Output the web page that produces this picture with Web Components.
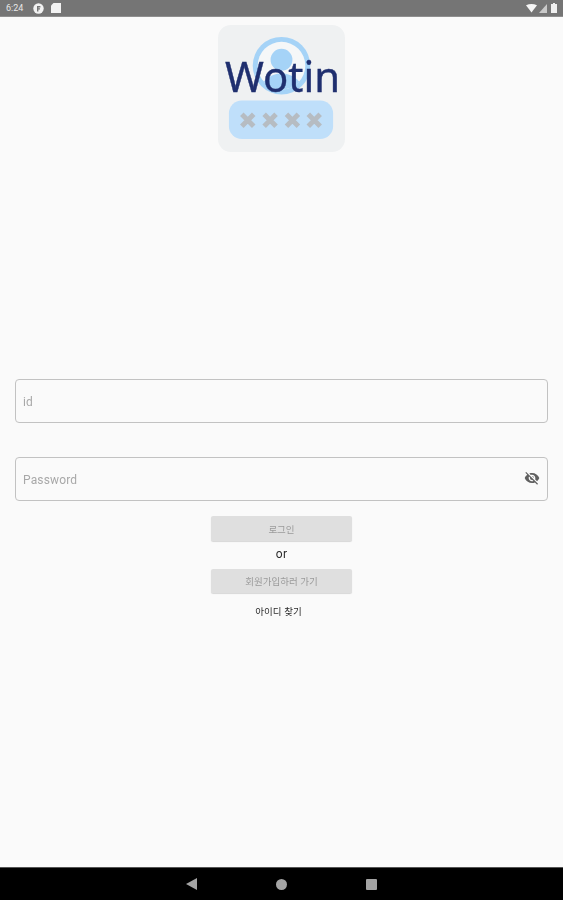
<!DOCTYPE html>
<html lang="ko">
<head>
<meta charset="utf-8">
<title>Wotin</title>
<style>
  html, body { margin: 0; height: 100%; }
  body { background: #fafafa; font-family: Roboto, "Noto Sans CJK KR", sans-serif; }
</style>
</head>
<body>
<app-screen>
  <status-bar slot="top"></status-bar>
  <login-form></login-form>
  <nav-bar slot="bottom"></nav-bar>
</app-screen>

<script>
class AppScreen extends HTMLElement {
  constructor() {
    super();
    this.attachShadow({ mode: 'open' });
    // the reference is a soft, rescaled capture, hence the slight blur
    this.shadowRoot.innerHTML = `
      <style>
        :host { display: flex; flex-direction: column; width: 563px; height: 900px; overflow: hidden; filter: blur(.4px); }
        main { flex: 1; min-height: 0; }
      </style>
      <slot name="top"></slot>
      <main><slot></slot></main>
      <slot name="bottom"></slot>
    `;
  }
}

class StatusBar extends HTMLElement {
  constructor() {
    super();
    this.attachShadow({ mode: 'open' });
    this.shadowRoot.innerHTML = `
      <style>
        :host {
          display: flex; align-items: center; gap: 5px;
          height: 17px; padding: 0 6px; box-sizing: border-box;
          background: #757575; color: #e8e8e8; border-bottom: 1px solid #8f8f8f;
          font: 9px Roboto, sans-serif;
        }
        .time { margin-right: 4px; width: 18px; }
        .right { margin-left: auto; display: flex; align-items: center; gap: 2px; }
        svg { display: block; }
      </style>
      <span class="time">6:24</span>
      <svg width="11" height="11" viewBox="0 0 11 11">
        <circle cx="5.5" cy="5.5" r="5.2" fill="#f2f2f2"/>
        <path d="M4 8.5V3h3.4v1.4H5.4v.8h1.6v1.3H5.4v2z" fill="#757575"/>
      </svg>
      <svg width="10" height="10" viewBox="0 0 10 10" style="margin-left:2px">
        <path d="M2.5 0H10v10H0V2.5z" fill="#f2f2f2"/>
      </svg>
      <div class="right">
        <svg width="11" height="9" viewBox="0 0 11 9"><path d="M0 1.2Q5.5-1 11 1.2L5.5 8.5z" fill="#f5f5f5"/></svg>
        <svg width="8" height="9" viewBox="0 0 8 9"><path d="M0 9L8 0v9z" fill="#c9c9c9"/></svg>
        <svg width="6" height="10" viewBox="0 0 6 10" style="margin-left:2px"><path d="M2 0h2v1h2v9H0V1h2z" fill="#f0f0f0"/></svg>
      </div>
    `;
  }
}

class WotinLogo extends HTMLElement {
  constructor() {
    super();
    this.attachShadow({ mode: 'open' });
    this.shadowRoot.innerHTML = `
      <style>
        :host { display: block; width: 127px; height: 127px; }
        svg { display: block; }
        text { font-family: "Noto Sans", "Open Sans", sans-serif; }
      </style>
      <svg width="127" height="127" viewBox="0 0 128 128">
        <defs><clipPath id="disc"><circle cx="64" cy="41" r="24"/></clipPath></defs>
        <rect width="128" height="128" rx="13" fill="#eff1f2"/>
        <circle cx="64" cy="41" r="29" fill="#a5d3f7"/>
        <circle cx="64" cy="41" r="24" fill="#f5f7f8"/>
        <circle cx="64" cy="35" r="11" fill="#a5d3f7"/>
        <ellipse cx="64" cy="68" rx="22" ry="19" fill="#a5d3f7" clip-path="url(#disc)"/>
        <rect x="11" y="76" width="105" height="39" rx="13" fill="#bfdffa"/>
        <g stroke="#b6bcc2" stroke-width="5" stroke-linecap="butt">
          <path d="M24 90l12 12M36 90l-12 12"/>
          <path d="M46.500 90l12 12M58.500 90l-12 12"/>
          <path d="M69 90l12 12M81 90l-12 12"/>
          <path d="M91 90l12 12M103 90l-12 12"/>
        </g>
        <text x="65" y="68" text-anchor="middle" font-size="43" fill="#1f2f6f" stroke="#1f2f6f" stroke-width=".4" textLength="116" lengthAdjust="spacingAndGlyphs">Wotin</text>
      </svg>
    `;
  }
}

class OutlinedField extends HTMLElement {
  constructor() {
    super();
    this.attachShadow({ mode: 'open' });
    this.shadowRoot.innerHTML = `
      <style>
        :host {
          display: flex; align-items: center;
          height: 44px; box-sizing: border-box; padding: 1px 7px 0;
          border: 1px solid #c2c2c2; border-radius: 4px;
          color: #a8a8a8; font: 12px/1 Roboto, sans-serif; letter-spacing: .15px;
        }
        .label { flex: 1; }
        ::slotted(svg) { display: block; margin-top: -3px; }
      </style>
      <span class="label"></span>
      <slot></slot>
    `;
  }
  connectedCallback() {
    this.shadowRoot.querySelector('.label').textContent = this.getAttribute('label');
  }
}

class FlatButton extends HTMLElement {
  constructor() {
    super();
    this.attachShadow({ mode: 'open' });
    this.shadowRoot.innerHTML = `
      <style>
        :host {
          display: flex; align-items: center; justify-content: center;
          width: 141px; height: 25px; border-radius: 2px;
          background: #dfdfdf; color: #9a9a9a;
          box-shadow: 0 1px 1px rgba(0,0,0,.14);
          font: 9.5px "Noto Sans CJK KR", sans-serif;
        }
      </style>
      <slot></slot>
    `;
  }
}

class LoginForm extends HTMLElement {
  constructor() {
    super();
    this.attachShadow({ mode: 'open' });
    this.shadowRoot.innerHTML = `
      <style>
        :host { display: flex; flex-direction: column; align-items: center; padding-top: 8px; }
        wotin-logo { margin-bottom: 227px; }
        outlined-field { align-self: stretch; margin: 0 15px 34px; }
        outlined-field.pw { margin-bottom: 15px; }
        .or { margin: 5px 0 6px; height: 17px; font: 12px/17px Roboto, sans-serif; color: #2b2b2b; letter-spacing: .3px; }
        .signup { height: 24px; }
        .find { margin: 10px 6px 0 0; font: 9.5px/17px "Noto Sans CJK KR", sans-serif; color: #2b2b2b; }
      </style>
      <wotin-logo></wotin-logo>
      <outlined-field label="id"></outlined-field>
      <outlined-field class="pw" label="Password">
        <svg width="16" height="16" viewBox="0 0 24 24" fill="#5f5f5f">
          <path d="M12 7c2.76 0 5 2.24 5 5 0 .65-.13 1.26-.36 1.83l2.92 2.92c1.51-1.26 2.7-2.89 3.43-4.75-1.73-4.39-6-7.5-11-7.5-1.4 0-2.74.25-3.98.7l2.16 2.16C10.74 7.13 11.35 7 12 7zM2 4.27l2.28 2.28.46.46C3.08 8.3 1.78 10.02 1 12c1.73 4.39 6 7.5 11 7.5 1.55 0 3.03-.3 4.38-.84l.42.42L19.73 22 21 20.73 3.27 3 2 4.27zM7.53 9.8l1.55 1.55c-.05.21-.08.43-.08.65 0 1.66 1.34 3 3 3 .22 0 .44-.03.65-.08l1.55 1.55c-.67.33-1.41.53-2.2.53-2.76 0-5-2.24-5-5 0-.79.2-1.53.53-2.2zm4.31-.78l3.15 3.15.02-.16c0-1.66-1.34-3-3-3l-.17.01z"/>
        </svg>
      </outlined-field>
      <flat-button>로그인</flat-button>
      <div class="or">or</div>
      <flat-button class="signup">회원가입하러 가기</flat-button>
      <div class="find">아이디 찾기</div>
    `;
  }
}

class NavBar extends HTMLElement {
  constructor() {
    super();
    this.attachShadow({ mode: 'open' });
    this.shadowRoot.innerHTML = `
      <style>
        :host {
          display: flex; align-items: center; justify-content: center; gap: 79px;
          height: 33px; background: #000; border-top: 1px solid #555; box-sizing: border-box;
        }
        svg { display: block; }
      </style>
      <svg width="11" height="12" viewBox="0 0 11 12"><path d="M11 0v12L0 6z" fill="#a4a4a4"/></svg>
      <svg width="11" height="11" viewBox="0 0 11 11"><circle cx="5.5" cy="5.5" r="5.5" fill="#a4a4a4"/></svg>
      <svg width="11" height="11" viewBox="0 0 11 11"><rect width="11" height="11" rx="1" fill="#a4a4a4"/></svg>
    `;
  }
}

customElements.define('app-screen', AppScreen);
customElements.define('status-bar', StatusBar);
customElements.define('wotin-logo', WotinLogo);
customElements.define('outlined-field', OutlinedField);
customElements.define('flat-button', FlatButton);
customElements.define('login-form', LoginForm);
customElements.define('nav-bar', NavBar);
</script>
</body>
</html>
